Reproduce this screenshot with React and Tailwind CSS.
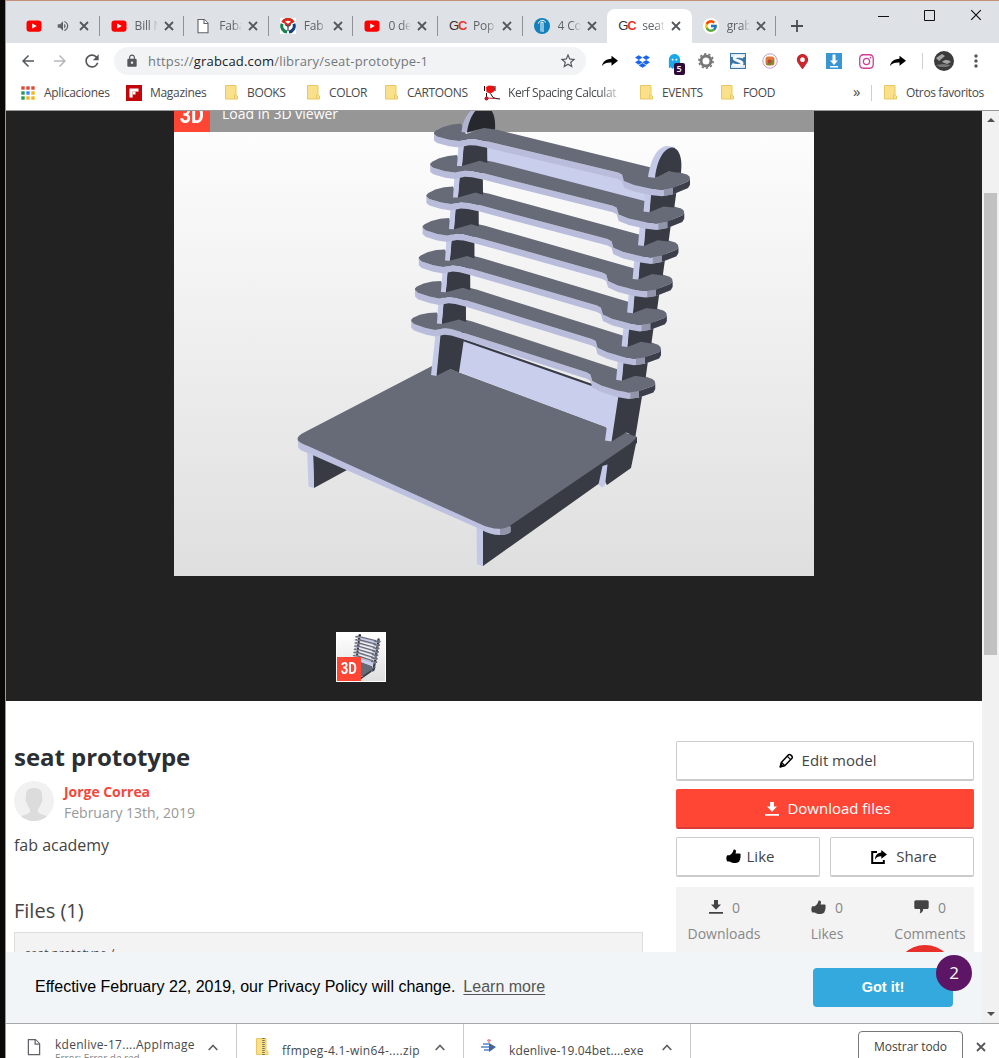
import React from "react";
import { FaDropbox, FaInstagram, FaMapMarkerAlt, FaGhost } from "react-icons/fa";
import { FcGoogle } from "react-icons/fc";
import { MdArrowBack, MdArrowForward, MdRefresh, MdLock, MdStarBorder, MdMoreVert, MdVolumeUp } from "react-icons/md";

/* ---------- small drawings ---------- */

const Cross = ({ className = "size-[9px] text-[#54575b]", sw = 1.8 }) => (
  <svg viewBox="0 0 10 10" className={className} fill="none" stroke="currentColor" strokeWidth={sw}>
    <path d="M1 1l8 8M9 1l-8 8" />
  </svg>
);

const YouTube = () => (
  <svg viewBox="0 0 16 16" className="size-4">
    <rect x="0.5" y="2.4" width="15" height="11.4" rx="3" fill="#f00" />
    <path d="M6.2 5.4v5.2l4.6-2.6z" fill="#fff" />
  </svg>
);

const Page = ({ className = "size-4" }) => (
  <svg viewBox="0 0 16 16" className={className} fill="#fff" stroke="#5f6368" strokeWidth="1.1">
    <path d="M3 1.5h6.3L13 5.2v9.6H3z" />
    <path d="M9 1.5v4h4" />
  </svg>
);

const FabLogo = () => (
  <svg viewBox="0 0 16 16" className="size-4">
    <rect width="16" height="16" fill="#fff" />
    <g fill="none" strokeWidth="3">
      <path d="M2.6 4.4A6.2 6.2 0 0 1 13.4 4.4" stroke="#d9291c" />
      <path d="M13.9 5.8A6.2 6.2 0 0 1 9 14.1" stroke="#16407c" />
      <path d="M7 14.1A6.2 6.2 0 0 1 2.1 5.8" stroke="#13824c" />
    </g>
    <path d="M3.500 3.500L8 7l4.500-3.500" stroke="#d9291c" strokeWidth="1.800" fill="none" />
    <path d="M5 6.500l3 2 3-2M8 8.500V13" stroke="#444" strokeWidth="1.200" fill="none" />
  </svg>
);

const GC = () => (
  <span className="w-4 text-[13px] leading-4 tracking-[-1px] font-['Liberation_Sans',sans-serif] text-[#333]">
    G<b className="text-[#e8352b]">C</b>
  </span>
);

const Instructable = () => (
  <svg viewBox="0 0 16 16" className="size-4">
    <circle cx="8" cy="8" r="8" fill="#1180bd" />
    <path d="M7 4.200h2V14M7 4.200V13.600M4.400 5.600C5 3 7 2 9 2.400c1.600.3 2.400 1.200 2.400 2.200" stroke="#fff" strokeWidth="1" fill="none" />
  </svg>
);

const Folder = () => (
  <svg viewBox="0 0 13 15" className="h-[15px] w-[13px] shrink-0">
    <path d="M.5.500h10.500v9.500l1.500 1v3H.5z" fill="#fbe08c" stroke="#e8c95f" />
    <path d="M9.500 14v-4.500" stroke="#e8c95f" />
  </svg>
);

const AppsGrid = () => (
  <svg viewBox="0 0 14 14" className="size-[14px] shrink-0">
    {["#de4b3b", "#de4b3b", "#de4b3b", "#1f9d57", "#4286f4", "#f2b51c", "#1f9d57", "#f2b51c", "#f2b51c"].map((c, i) => (
      <rect key={i} x={(i % 3) * 5 + 0.3} y={Math.floor(i / 3) * 5 + 0.3} width="3.400" height="3.400" fill={c} />
    ))}
  </svg>
);

const Flip = () => (
  <svg viewBox="0 0 16 16" className="size-4 shrink-0">
    <rect width="16" height="16" fill="#c1070b" />
    <path d="M3.500 3.500h9v3h-3v3h-3v3h-3z" fill="#fff" />
    <path d="M6.500 6.500h6M6.500 6.500v6" stroke="#e9a3a3" strokeWidth=".7" />
  </svg>
);

const Kerf = () => (
  <svg viewBox="0 0 16 16" className="size-4 shrink-0">
    <path d="M2 2l3-1.500 5 .5 1 3-1.500 3L6 8.500 2.500 7z" fill="#ee1111" />
    <path d="M.5 1v5M11 1v5M2.500 8v4M6.500 8.500l2.500 4 3 1 4 .5" stroke="#2a0505" fill="none" />
    <path d="M3 13l8.500.5" stroke="#c11a2a" />
    <circle cx="2.500" cy="13.500" r="2" fill="#c11a2a" />
  </svg>
);

const Forward = () => (
  <svg viewBox="0 0 16 12" className="h-3 w-4">
    <path d="M9.500.8L16 5.800l-6.500 5V7.600C5 7.400 2.500 8.200 0 11c.7-4 3.500-7 9.500-7.200z" fill="#000" />
  </svg>
);

const Gear = () => (
  <svg viewBox="0 0 16 16" className="size-4" fill="none" stroke="#777">
    <circle cx="8" cy="8" r="5" strokeWidth="3" />
    <circle cx="8" cy="8" r="7.100" strokeWidth="1.600" strokeDasharray="2.230 2.230" />
  </svg>
);

const SBox = () => (
  <svg viewBox="0 0 16 16" className="size-4">
    <rect width="16" height="16" fill="#3a76a6" />
    <path d="M1 1h14v3H1zM1 12h14v3H1z" fill="#dce8f1" />
    <path d="M13.500 4.200C11 2.800 4.200 2.600 4.200 5.300c0 2.700 7.800 2.200 7.800 5 0 2.900-7 2.700-10 1" fill="none" stroke="#f4f8fb" strokeWidth="3" />
  </svg>
);

const Swirl = () => (
  <svg viewBox="0 0 16 16" className="size-4">
    <circle cx="8" cy="8" r="7.200" fill="#fff" stroke="#c79bc4" />
    <rect x="3.500" y="3.500" width="9" height="9" rx="2.500" fill="#e07a3a" />
    <path d="M4 11c2 2 7 2 8-2V6z" fill="#71902e" />
    <circle cx="7.500" cy="8.500" r="2" fill="#b8443a" />
  </svg>
);

const Download = ({ className }) => (
  <svg viewBox="0 0 14 14" className={className} fill="currentColor">
    <path d="M5 0h4v4.600h3L7 9.800 2 4.600h3zM0 12h14v1.700H0z" />
  </svg>
);

const Thumb = ({ className }) => (
  <svg viewBox="0 0 15 15" className={className} fill="currentColor">
    <path d="M5 5.200C6.500 4 7.300 2.400 7.600.5c1.900-.5 2.700 1 2.300 2.600L9.500 4.600h4c1.300.2 1.500 1.600.8 2.300.6.700.5 1.600-.2 2.100.4.800.1 1.600-.5 2 .2 1-.3 1.700-1.100 2.100-1.500 1.200-6 1.300-7.500.2L3.600 12.500H1.300C0 10.500 0 8.300 1.200 6.300H3.600z" />
  </svg>
);

const Pencil = () => (
  <svg viewBox="0 0 15 15" className="size-[15px]" fill="none" stroke="#000" strokeWidth="1.500" strokeLinejoin="round">
    <path d="M1.300 13.800l1-4.300 7-7.600c1.500-1.500 5 1.500 3.700 3.400L5.700 12.800z" />
    <path d="M2.600 9.500l3 3M8.300 3.300l3.400 3.300" strokeWidth="1.200" />
    <path d="M1.300 13.800l.7-2.500 1.700 1.700z" fill="#000" />
  </svg>
);

const ShareBox = () => (
  <svg viewBox="0 0 16 14" className="h-[14px] w-4">
    <path d="M6 1.900H1.200v11h11.600V10" fill="none" stroke="#000" strokeWidth="2" />
    <path d="M10.300 0L16 4.400l-5.700 4.300V6.300C7.500 6.200 5.500 7 4 9.700c0-4 2.300-6.900 6.300-7.200z" />
  </svg>
);

const Bubble = () => (
  <svg viewBox="0 0 15 14" className="h-[14px] w-[15px]" fill="#444">
    <path d="M2 .3h11c1.200 0 1.700.7 1.700 1.700v5c0 1.400-.7 2-1.700 2H9.200c0 2-1.200 3.600-3.400 4.400.5-1.200.5-3 .2-4.400H2C.8 9 .3 8.200.3 7.200V2C.3 1 1 .3 2 .3z" />
  </svg>
);

const Chevron = () => (
  <svg viewBox="0 0 10 7" className="h-[7px] w-[10px] shrink-0" fill="none" stroke="#5f6368" strokeWidth="1.700">
    <path d="M.7 6L5 1.500 9.300 6" />
  </svg>
);

/* ---------- the 3D model ---------- */

const place = (i, pts) =>
  pts
    .map(([x, y]) => {
      const t = (x - 434) / 256;
      return `${(x - i * (3.8 + 2 * t)).toFixed(1)},${(y + i * (31.2 + 2.9 * t)).toFixed(1)}`;
    })
    .join(" ");

const BACK = [[690, 179], [689.500, 176.500], [687, 174.500], [674, 171], [669, 171.500], [656, 177], [651, 167.500], [498, 130], [484, 127.500], [466, 134], [461, 123.500], [452, 124.500], [443, 127], [436, 130.500], [434, 132.500]];
const FRONT = [[434, 134], [437, 136.500], [449, 139.800], [459, 141], [469, 138.700], [476, 139], [488, 141.500], [618, 172.500], [622, 174.500], [624, 181], [634, 185], [650, 188.500], [662, 189.800], [673, 187.700], [688, 181.500], [690, 179]];
const down = (pts, d) => pts.map(([x, y]) => [x, y + d]).reverse();
const LFOOT = [[461, 134.500], [466, 134.500]];
const LDARK = [[466, 134.500], [484, 129], [491.500, 131]];
const RFOOT = [[649, 178], [655, 178.500]];
const RDARK = [[655, 178.500], [669, 172.500], [680, 173.500]];

function Slat({ i }) {
  return (
    <g>
      {i < 6 && (
        <g>
          <polygon points={`${place(i, [[487, 138], [464, 138]])} ${place(i + 1, LDARK)}`} fill="#383b43" />
          <polygon points={`${place(i, [[464.500, 138], [459, 138]])} ${place(i + 1, LFOOT)}`} fill="#c5c9e8" />
          <polygon points={`${place(i, [[678, 180], [651, 184]])} ${place(i + 1, RDARK)}`} fill="#383b43" />
          <polygon points={`${place(i, [[652, 184], [646, 184]])} ${place(i + 1, RFOOT)}`} fill="#c5c9e8" />
        </g>
      )}
      <polygon points={place(i, [...FRONT, ...down(FRONT, 6.500)])} fill="#b9bddb" />
      <polygon points={place(i, [[673, 187.700], [688, 181.500], [690, 179], [690, 184.500], [688, 188], [673, 194.200]])} fill="#3c3e49" />
      <polygon points={place(i, [[664, 189], [673, 187.700], [673, 194.200], [664, 196]])} fill="#9295aa" />
      <polygon points={place(i, [...FRONT, ...BACK])} fill="#676a77" />
    </g>
  );
}

function Seat({ viewBox, className }) {
  return (
    <svg viewBox={viewBox} className={className}>
      <polygon points="313,453 314,488 347,470" fill="#383b43" />
      <polygon points="307,449 308.500,486.500 314,488 313,451" fill="#c5c9e8" />
      <polygon points="482,525 505,515 632,432 637,438 635.500,446 631,468 607,485 604,480 483,566" fill="#383b43" />
      <polygon points="476.500,524 477,564 483,566.500 483,528" fill="#c5c9e8" />
      <polygon points="602.500,466 607.500,464.500 605,485.500 602,487.500 598.500,484.500" fill="#c5c9e8" />
      <path d="M297.500 438L298.500 448Q301 451 308 453L480 529Q490 535 500 535Q508 535 510.500 532L510.500 527L480 518Z" fill="#bdc1df" />
      <path d="M500 528L510.500 526V532Q508 535 500 535Z" fill="#9295aa" />
      <path d="M432 366L305 432Q295 437 298.500 441Q301 443.500 308 446L478 523Q492 530 503 528.500Q508 527.500 514 523L637 439L637 437L625 432.500L612 441L606 427L450 369Z" fill="#676a77" />
      <path d="M637 437v6l-6 4v-4z" fill="#383b43" />
      <polygon points="463,338 619,394 612,430 607,427.500 459,372" fill="#c8ceeb" />
      <path d="M463 340L592 385" stroke="#383b43" strokeWidth="2.200" />
      <polygon points="440,332 465,332 459,372.500 450,369 436,376" fill="#383b43" />
      <polygon points="436,330 441,330 436.500,376 431,375" fill="#c5c9e8" />
      <polygon points="617,394 643,390 635.500,436 626,432.500 611,442" fill="#383b43" />
      <polygon points="612,390 619,392 611.500,441.500 605,440.500" fill="#c8ceeb" />
      <polygon points="487,142 652,184 645,203 487,164" fill="#c8ceeb" />
      {[6, 5, 4, 3, 2, 1, 0].map((i) => <Slat key={i} i={i} />)}
      <path d="M461.500 132C463 118 470 108 480 106H484L470 133Z" fill="#b0b4d0" />
      <path d="M467 132.500C469 117 476 107 484 106C492 107 496 116 495 129.500L484 128Z" fill="#26282e" />
      <path d="M648 177C650 162 656 147 667 146L675 147L656 178Z" fill="#c5c9e8" />
      <path d="M655 178C657 160 664 148 672 147.500C679 148 683 158 681 173L669 171.500Z" fill="#383b43" />
    </svg>
  );
}

/* ---------- browser chrome ---------- */

function Tab({ icon, text, active, first, noSep }) {
  return (
    <div
      className={
        "flex h-[34px] w-[84.600px] shrink-0 items-center pl-[11px] " +
        (active ? "rounded-t-lg bg-white" : "")
      }
    >
      <div className="flex w-4 shrink-0 justify-center">{icon}</div>
      {first ? (
        <div className="ml-[14px] flex w-[23px]"><MdVolumeUp className="size-[14px] text-[#5f6368]" /></div>
      ) : (
        <div className="ml-2 w-[23px] overflow-hidden whitespace-nowrap text-[12px] tracking-[-0.2px] text-[#5f6368] [mask-image:linear-gradient(to_right,black_60%,transparent)]">
          {text}
        </div>
      )}
      <Cross className={"size-[10px] shrink-0 text-[#54575b] " + (first ? "" : "ml-[6px]")} />
      <div className={"ml-auto h-5 w-px " + (active || noSep ? "" : "bg-[#8f9296]")} />
    </div>
  );
}

function Bookmark({ icon, children, className }) {
  return (
    <div className={"flex shrink-0 items-center overflow-hidden whitespace-nowrap " + className}>
      {icon}
      <span>{children}</span>
    </div>
  );
}

const Ext = ({ children }) => <div className="flex w-8 shrink-0 items-center justify-center">{children}</div>;

function Chrome() {
  return (
    <header className="h-[111px] shrink-0 border-b border-[#999] bg-white font-['Open_Sans',sans-serif]">
      <div className="flex h-[43px] items-end border-t border-[#c4907a] bg-[#dee1e6] pl-[9px]">
        <Tab first icon={<YouTube />} />
        <Tab icon={<YouTube />} text="Bill N" />
        <Tab icon={<Page />} text="Faba" />
        <Tab icon={<FabLogo />} text="Fab" />
        <Tab icon={<YouTube />} text="0 de" />
        <Tab icon={<GC />} text="Pop" />
        <Tab icon={<Instructable />} text="4 Co" noSep />
        <Tab icon={<GC />} text="seat" active />
        <Tab icon={<span className="rounded-full bg-white p-px"><FcGoogle className="size-[14px]" /></span>} text="grab" />
        <div className="flex h-[34px] w-[60px] items-center pl-[15px]">
          <svg viewBox="0 0 12 12" className="size-3" stroke="#4b4e52" strokeWidth="1.800"><path d="M6 0v12M0 6h12" /></svg>
        </div>
        <div className="ml-auto mr-[17px] flex items-center gap-[35px] self-start pt-[8px]">
          <svg viewBox="0 0 11 11" className="size-[11px]" stroke="#111"><path d="M0 6.500h11" /></svg>
          <svg viewBox="0 0 11 11" className="size-[11px]" fill="none" stroke="#111"><path d="M.5.500h10v10H.5z" /></svg>
          <Cross className="size-3 text-[#111]" sw={1} />
        </div>
      </div>

      <div className="flex h-[36px] items-center pl-[13px] text-[#54575b]">
        <MdArrowBack className="mr-[14px] size-[18px]" />
        <MdArrowForward className="mr-[13px] size-[18px] text-[#b5b7ba]" />
        <MdRefresh className="size-5" />
        <div className="ml-[12px] flex h-7 w-[472px] items-center rounded-full bg-[#f1f3f4] pl-[11px]">
          <MdLock className="size-[14px]" />
          <span className="ml-[9px] text-[13px] leading-5 tracking-[0.180px] text-[#74787c]">
            https://<span className="text-[#202124]">grabcad.com</span>/library/seat-prototype-1
          </span>
          <MdStarBorder className="ml-auto mr-[9px] size-[18px]" />
        </div>
        <div className="ml-2 flex">
          <Ext><Forward /></Ext>
          <Ext><FaDropbox className="size-[15px] text-[#1a66ee]" /></Ext>
          <Ext>
            <div className="relative">
              <FaGhost className="size-[15px] text-[#1aa8e8]" />
              <span className="absolute left-[7px] top-[9px] rounded-[2px] bg-[#2d0a38] px-[3px] text-[9px] font-semibold leading-[12px] text-white">5</span>
            </div>
          </Ext>
          <Ext><Gear /></Ext>
          <Ext><SBox /></Ext>
          <Ext><Swirl /></Ext>
          <Ext><FaMapMarkerAlt className="size-[15px] text-[#c8282d]" /></Ext>
          <Ext>
            <svg viewBox="0 0 16 16" className="size-4">
              <rect width="16" height="16" fill="#3796d3" />
              <path d="M6.500 1.500h3v6H12l-4 4.500-4-4.500h2.500zM4 13h8v1.500H4z" fill="#fff" />
            </svg>
          </Ext>
          <Ext><FaInstagram className="size-[17px] text-[#cf3f91]" /></Ext>
          <Ext><Forward /></Ext>
        </div>
        <div className="ml-[8px] h-4 w-px bg-[#cfcfcf]" />
        <svg viewBox="0 0 20 20" className="ml-[11px] size-5">
          <circle cx="10" cy="10" r="10" fill="#3b3b3b" />
          <path d="M2 7l6-4 3 2-6 5zM8 11c3-3 7-2 9 0l-4 2z" fill="#a5a5a5" />
          <path d="M2 14l7-1 8 1-4 2H6z" fill="#777" />
        </svg>
        <MdMoreVert className="ml-[12px] size-5" />
      </div>

      <div className="flex h-[27px] items-center pl-[15px] text-[12px] text-[#47494c]">
        <Bookmark icon={<AppsGrid />} className="w-[105px] gap-[9px] tracking-[-0.300px]">Aplicaciones</Bookmark>
        <Bookmark icon={<Flip />} className="w-[99px] gap-2 tracking-[-0.300px]">Magazines</Bookmark>
        <Bookmark icon={<Folder />} className="w-[82px] gap-[9px] tracking-[-0.350px]">BOOKS</Bookmark>
        <Bookmark icon={<Folder />} className="w-[78px] gap-[9px] tracking-[-0.350px]">COLOR</Bookmark>
        <Bookmark icon={<Folder />} className="w-[99px] gap-[9px] tracking-[-0.350px]">CARTOONS</Bookmark>
        <Bookmark icon={<Kerf />} className="mr-[20px] w-[136px] gap-2 tracking-[-0.420px] [mask-image:linear-gradient(to_right,black_85%,transparent_103%)]">Kerf Spacing Calculat</Bookmark>
        <Bookmark icon={<Folder />} className="w-[81px] gap-[9px] tracking-[-0.350px]">EVENTS</Bookmark>
        <Bookmark icon={<Folder />} className="w-[131px] gap-[9px] tracking-[-0.350px]">FOOD</Bookmark>
        <span className="w-[19px] pb-[3px] pl-px text-[15px] leading-4">»</span>
        <div className="mr-[12px] h-4 w-px bg-[#cfcfcf]" />
        <Bookmark icon={<Folder />} className="gap-[9px] tracking-[-0.380px]">Otros favoritos</Bookmark>
      </div>
    </header>
  );
}

/* ---------- page ---------- */

const Badge3D = ({ className }) => (
  <div className={"flex items-center justify-center overflow-hidden bg-[#ff4533] font-['Roboto',sans-serif] font-bold text-white " + className}>
    <span className="scale-x-[0.820]">3D</span>
  </div>
);

function Viewer() {
  return (
    <section className="flex h-[590px] shrink-0 flex-col items-center overflow-hidden bg-[#222]">
      <div className="relative -mt-[15px] h-[480px] w-[640px] shrink-0 bg-linear-to-b from-white to-[#dfdfdf]">
        <div className="h-9 bg-[#969696]" />
        <Seat viewBox="174 96 640 480" className="absolute inset-0 h-[480px] w-[640px]" />
        <div className="absolute left-0 top-0 flex h-9 items-center font-['Open_Sans',sans-serif] text-[14px] text-white">
          <Badge3D className="size-9 pt-[2px] text-[24px]" />
          <span className="ml-3 pb-[2px]">Load in 3D viewer</span>
        </div>
      </div>
      <div className="relative mr-[254px] mt-[56px] size-[50px] shrink-0 -translate-x-[6px] border border-white bg-linear-to-b from-white to-[#dfdfdf]">
        <Seat viewBox="254 96 480 480" className="size-12" />
        <Badge3D className="absolute bottom-0 left-0 size-6 text-[16px]" />
      </div>
    </section>
  );
}

const Button = ({ children, className }) => (
  <div className={"flex h-10 items-center justify-center gap-2 rounded-[2px] border border-b-2 text-[15px] " + className}>{children}</div>
);

function Details() {
  return (
    <section className="flex min-h-0 flex-1 overflow-hidden bg-white pl-2 pr-2 pt-10 font-['Open_Sans',sans-serif] text-[#444]">
      <div className="w-[629px] shrink-0">
        <h1 className="text-[24px] font-bold leading-8 tracking-[-0.050px] text-[#2b2f33]">seat prototype</h1>
        <div className="mt-2 flex h-10 items-center">
          <svg viewBox="0 0 40 40" className="size-10 shrink-0">
            <defs><clipPath id="av"><circle cx="20" cy="20" r="20" /></clipPath></defs>
            <g clipPath="url(#av)">
              <rect width="40" height="40" fill="#f1f1f1" />
              <path d="M12 17C11 10 14 7 20 7s9 3 8 10c1 1 .5 4-.8 5-.7 3-2 5-3.200 6v3c2 3 9 3 12 6v4H4v-4c3-3 10-3 12-6v-3c-1.200-1-2.500-3-3.200-6-1.300-1-1.800-4-.8-5z" fill="#dcdcdc" />
            </g>
          </svg>
          <div className="ml-[10px] pt-[2px] text-[14px] leading-[21px]">
            <div className="font-bold tracking-[-0.040px] text-[#f4473b]">Jorge Correa</div>
            <div className="text-[#999]">February 13th, 2019</div>
          </div>
        </div>
        <p className="mt-[12px] text-[16px] leading-6 tracking-[-0.020px]">fab academy</p>
        <h2 className="mt-[40px] text-[20px] leading-7">Files (1)</h2>
        <div className="mt-[7px] h-40 border border-[#ddd] bg-[#f3f3f3] pl-[10px] pt-[11px] text-[12px] leading-5">seat prototype /</div>
      </div>

      <aside className="relative ml-[33px] w-[298px] shrink-0">
        <Button className="border-[#ccc] pl-[5px]"><Pencil />Edit model</Button>
        <Button className="mt-2 border-[#ff4533] border-b-[#d93b36] bg-[#ff4533] pl-[6px] text-white"><Download className="size-[14px]" />Download files</Button>
        <div className="mt-2 flex gap-[10px]">
          <Button className="flex-1 !gap-[6px] border-[#ccc] pl-[4px]"><Thumb className="size-[15px] text-black" />Like</Button>
          <Button className="flex-1 !gap-[9px] border-[#ccc] pl-[4px]"><ShareBox />Share</Button>
        </div>
        <div className="mt-[10px] flex h-40 justify-between bg-[#f3f3f3] pl-2 pr-1 pt-[7px] text-center text-[14px] text-[#888]">
          <div className="w-20">
            <div className="flex h-[26px] items-center justify-center gap-[9px] pl-px"><Download className="size-[14px] text-[#444]" />0</div>
            <div className="pt-px leading-[26px]">Downloads</div>
          </div>
          <div className="w-20">
            <div className="flex h-[26px] items-center justify-center gap-[9px]"><Thumb className="size-[15px] text-[#444]" />0</div>
            <div className="pt-px leading-[26px]">Likes</div>
          </div>
          <div className="w-20">
            <div className="flex h-[26px] items-center justify-center gap-[9px]"><Bubble />0</div>
            <div className="pt-px leading-[26px]">Comments</div>
          </div>
        </div>
        <div className="absolute left-[219px] top-[204px] size-[60px] rounded-full bg-[#e8302a]" />
      </aside>
    </section>
  );
}

function PrivacyBanner() {
  return (
    <div className="absolute inset-x-0 bottom-0 flex h-[71px] items-center bg-[#f1f5f8] pl-[29px] font-['Liberation_Sans',sans-serif] text-[16px] text-black">
      <span className="pb-[2px]">Effective February 22, 2019, our Privacy Policy will change.</span>
      <span className="ml-2 pb-[2px] text-[#555] underline underline-offset-2">Learn more</span>
      <div className="relative ml-auto mr-[29px] flex h-[39px] w-[140px] items-center justify-center rounded-[4px] bg-[#33a9dd] text-[14.500px] font-bold text-white">
        Got it!
        <span className="absolute -right-[19px] -top-[13px] flex size-[36px] items-center justify-center rounded-full bg-[#5d1565] font-['Open_Sans',sans-serif] text-[17px] font-normal">2</span>
      </div>
    </div>
  );
}

function Scrollbar() {
  return (
    <div className="flex w-[17px] shrink-0 flex-col items-center bg-[#f1f1f1]">
      <svg viewBox="0 0 8 4" className="mt-[7px] h-1 w-2"><path d="M0 4h8L4 0z" fill="#505050" /></svg>
      <div className="mt-[71px] h-[462px] w-[13px] bg-[#c1c1c1]" />
      <svg viewBox="0 0 8 4" className="mb-[7px] mt-auto h-1 w-2"><path d="M0 0h8L4 4z" fill="#505050" /></svg>
    </div>
  );
}

function Downloads() {
  return (
    <footer className="flex h-[35px] shrink-0 overflow-hidden border-t border-[#a9a9a9] bg-white font-['Open_Sans',sans-serif] text-[12px] text-[#47494c]">
      <div className="flex w-[231px] shrink-0 border-r border-[#ccc] pl-[19px]">
        <Page className="mt-[14px] size-[18px] shrink-0" />
        <div className="ml-[12px] w-[153px] whitespace-nowrap pt-[13px] leading-4">
          <div className="tracking-[0.280px]">kdenlive-17....AppImage</div>
          <div className="-mt-[3px] text-[10px] tracking-[-0.050px] text-[#888]">Error: Error de red</div>
        </div>
        <div className="mt-[20px] flex"><Chevron /></div>
      </div>
      <div className="flex w-[227px] shrink-0 border-r border-[#ccc] pl-[19px]">
        <svg viewBox="0 0 13 17" className="mt-[14px] h-[17px] w-[13px] shrink-0">
          <path d="M.5.500h9.500v12l2 1v3H.5z" fill="#fbe08c" stroke="#e8c95f" />
          <path d="M7.500 0v17" stroke="#77704c" strokeWidth="2.500" strokeDasharray="1 1" />
        </svg>
        <div className="ml-[13px] w-[153px] whitespace-nowrap pt-[19px] leading-4 tracking-[0.320px]">ffmpeg-4.1-win64-....zip</div>
        <div className="mt-[20px] flex"><Chevron /></div>
      </div>
      <div className="flex w-[227px] shrink-0 border-r border-[#ccc] pl-[17px]">
        <svg viewBox="0 0 16 16" className="mt-[15px] size-4 shrink-0">
          <path d="M8 4l7 4-7 5z" fill="#47639c" />
          <path d="M2 5h6M0 8h8M3 11h5" stroke="#7da4d6" strokeWidth="1.800" />
          <path d="M8 0v4M6 1.500h4" stroke="#e58a96" strokeWidth="1.500" />
        </svg>
        <div className="ml-[12px] w-[153px] whitespace-nowrap pt-[19px] leading-4 tracking-[0.120px]">kdenlive-19.04bet....exe</div>
        <div className="mt-[20px] flex"><Chevron /></div>
      </div>
      <div className="ml-auto mr-[13px] mt-[7px] flex h-[31px] w-[105px] shrink-0 items-center justify-center rounded-[4px] border border-[#777] tracking-[-0.050px] text-[#3c4043]">Mostrar todo</div>
      <div className="mr-[13px] pt-[18px]"><Cross className="size-[10px] text-[#54575b]" /></div>
    </footer>
  );
}

export default function App() {
  return (
    <div className="flex h-[1058px] w-[999px] overflow-hidden bg-[#0b0808]">
      <div className="ml-[5px] flex w-[994px] flex-col border-l border-[#c98a66]">
        <Chrome />
        <div className="flex min-h-0 flex-1">
          <main className="relative flex w-[976px] flex-col overflow-hidden">
            <Viewer />
            <Details />
            <PrivacyBanner />
          </main>
          <Scrollbar />
        </div>
        <Downloads />
      </div>
    </div>
  );
}
